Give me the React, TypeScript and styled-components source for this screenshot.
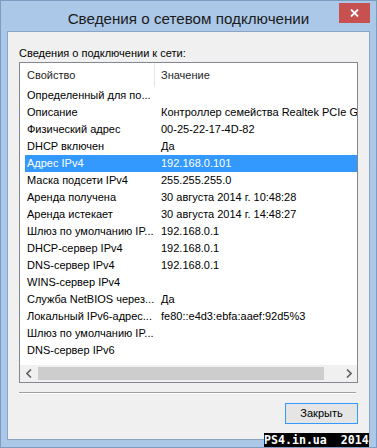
import * as React from 'react';
import styled, { createGlobalStyle } from 'styled-components';

const GlobalCss = createGlobalStyle`
  html, body {
    margin: 0;
    padding: 0;
    background: #ffffff;
  }
  body {
    font-family: "Liberation Sans", Arial, sans-serif;
  }
`;

interface Property {
  name: string;
  value: string;
  selected?: boolean;
}

const properties: Property[] = [
  { name: 'Определенный для по...', value: '' },
  { name: 'Описание', value: 'Контроллер семейства Realtek PCIe G' },
  { name: 'Физический адрес', value: '00-25-22-17-4D-82' },
  { name: 'DHCP включен', value: 'Да' },
  { name: 'Адрес IPv4', value: '192.168.0.101', selected: true },
  { name: 'Маска подсети IPv4', value: '255.255.255.0' },
  { name: 'Аренда получена', value: '30 августа 2014 г. 10:48:28' },
  { name: 'Аренда истекает', value: '30 августа 2014 г. 14:48:27' },
  { name: 'Шлюз по умолчанию IP...', value: '192.168.0.1' },
  { name: 'DHCP-сервер IPv4', value: '192.168.0.1' },
  { name: 'DNS-сервер IPv4', value: '192.168.0.1' },
  { name: 'WINS-сервер IPv4', value: '' },
  { name: 'Служба NetBIOS через...', value: 'Да' },
  { name: 'Локальный IPv6-адрес...', value: 'fe80::e4d3:ebfa:aaef:92d5%3' },
  { name: 'Шлюз по умолчанию IP...', value: '' },
  { name: 'DNS-сервер IPv6', value: '' },
];

const Window = styled.div`
  position: relative;
  box-sizing: border-box;
  width: 377px;
  height: 448px;
  border: 1px solid #7d9cc2;
  background: #abc8e9;
  padding: 0 6px 7px;
  display: flex;
  flex-direction: column;
`;

const TitleBar = styled.div`
  height: 30px;
  display: grid;
  grid-template-columns: 1fr auto 1fr;
  align-items: start;
`;

const Title = styled.div`
  grid-column: 2;
  padding-top: 8px;
  line-height: 20px;
  font-size: 15.2px;
  color: #1b1b1b;
  white-space: nowrap;
`;

const CloseButton = styled.div`
  grid-column: 3;
  justify-self: end;
  margin-top: 2px;
  width: 31px;
  height: 20px;
  background: #c75050;
  display: flex;
  align-items: center;
  justify-content: center;
`;

const Body = styled.div`
  flex: 1;
  background: #f0f0f0;
  border: 1px solid #8ba4c3;
  padding: 15px 11px 0;
  display: flex;
  flex-direction: column;
`;

const Caption = styled.div`
  font-size: 11px;
  line-height: 13px;
  color: #000;
  white-space: nowrap;
`;

const ListBox = styled.div`
  margin-top: 2px;
  height: 321px;
  box-sizing: border-box;
  border: 1px solid #828790;
  background: #ffffff;
  display: flex;
  flex-direction: column;
  overflow: hidden;
`;

const Header = styled.div`
  height: 24px;
  flex: none;
  display: grid;
  grid-template-columns: 135px 1fr;
  font-size: 11px;
  line-height: 24px;
  color: #1e1e1e;
`;

const HeaderCell = styled.div<{ $first?: boolean }>`
  padding-left: ${p => (p.$first ? 7 : 6)}px;
  border-right: ${p => (p.$first ? '1px solid #e5e5e5' : 'none')};
  white-space: nowrap;
`;

const Rows = styled.div`
  flex: 1;
  overflow: hidden;
`;

const Row = styled.div<{ $selected?: boolean }>`
  margin-left: 5px;
  height: 17px;
  display: grid;
  grid-template-columns: 130px 1fr;
  font-size: 11px;
  line-height: 17px;
  background: ${p => (p.$selected ? '#3399ff' : 'transparent')};
  color: ${p => (p.$selected ? '#ffffff' : '#000000')};
`;

const Cell = styled.div<{ $value?: boolean }>`
  padding-left: ${p => (p.$value ? 6 : 2)}px;
  white-space: nowrap;
  overflow: hidden;
`;

const HScroll = styled.div`
  height: 17px;
  flex: none;
  background: #f0f0f0;
  display: grid;
  grid-template-columns: 17px 1fr 17px;
  align-items: center;
`;

const ScrollArrow = styled.div`
  height: 17px;
  display: flex;
  align-items: center;
  justify-content: center;
`;

const Track = styled.div`
  height: 17px;
  padding: 2px 0 2px 1px;
  box-sizing: border-box;
`;

const Thumb = styled.div`
  height: 13px;
  background: #cdcdcd;
`;

const Separator = styled.div`
  margin: 9px 2px 0 0;
  border-top: 1px solid #a0a0a0;
  border-bottom: 1px solid #ffffff;
`;

const Footer = styled.div`
  display: flex;
  justify-content: flex-end;
  padding-top: 9px;
`;

const Button = styled.div`
  width: 73px;
  height: 21px;
  box-sizing: border-box;
  border: 1px solid #3399ff;
  background: #e5e5e5;
  font-size: 11px;
  line-height: 19px;
  text-align: center;
  color: #000;
`;

const Watermark = styled.div`
  position: absolute;
  right: 7px;
  bottom: 0;
  width: 105px;
  height: 14px;
  background: #000;
  color: #fff;
  font-family: "DejaVu Sans Mono", "Liberation Mono", monospace;
  font-weight: bold;
  font-size: 11.6px;
  line-height: 14px;
  white-space: pre;
  overflow: hidden;
`;

const Chevron = ({ dir }: { dir: 'left' | 'right' }) => (
  <svg width="6" height="9" viewBox="0 0 6 9">
    <polyline
      points={dir === 'left' ? '5,0.5 1,4.5 5,8.5' : '1,0.5 5,4.5 1,8.5'}
      fill="none"
      stroke="#606060"
      strokeWidth="1.6"
    />
  </svg>
);

export default function App() {
  return (
    <>
      <GlobalCss />
      <Window>
        <TitleBar>
          <Title>Сведения о сетевом подключении</Title>
          <CloseButton>
            <svg width="9" height="8" viewBox="0 0 9 8">
              <path d="M1 0.5 L8 7.5 M8 0.5 L1 7.5" stroke="#ffffff" strokeWidth="1.8" />
            </svg>
          </CloseButton>
        </TitleBar>
        <Body>
          <Caption>Сведения о подключении к сети:</Caption>
          <ListBox>
            <Header>
              <HeaderCell $first>Свойство</HeaderCell>
              <HeaderCell>Значение</HeaderCell>
            </Header>
            <Rows>
              {properties.map((p, i) => (
                <Row key={i} $selected={p.selected}>
                  <Cell>{p.name}</Cell>
                  <Cell $value>{p.value}</Cell>
                </Row>
              ))}
            </Rows>
            <HScroll>
              <ScrollArrow>
                <Chevron dir="left" />
              </ScrollArrow>
              <Track>
                <Thumb style={{ width: `${(285 / 301) * 100}%` }} />
              </Track>
              <ScrollArrow>
                <Chevron dir="right" />
              </ScrollArrow>
            </HScroll>
          </ListBox>
          <Separator />
          <Footer>
            <Button>Закрыть</Button>
          </Footer>
        </Body>
        <Watermark>PS4.in.ua  2014</Watermark>
      </Window>
    </>
  );
}
